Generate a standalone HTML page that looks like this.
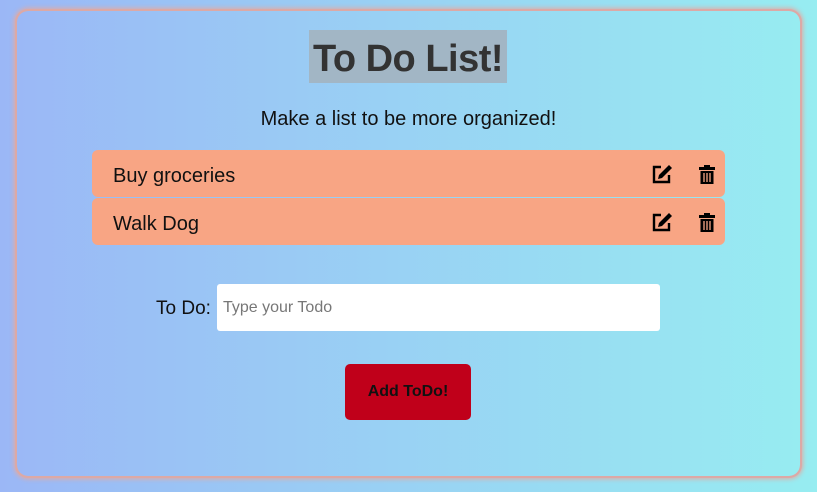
<!DOCTYPE html>
<html><head><style>
html,body{margin:0;padding:0;}
body{width:817px;height:492px;overflow:hidden;background:linear-gradient(90deg,#9bb7f6,#97edf1);font-family:"Liberation Sans",sans-serif;position:relative;white-space:nowrap;}
.card{position:absolute;left:17px;top:11px;width:783px;height:465px;border-radius:11px;box-shadow:0 0 0 2px #dca9a6,0 0 5px 3px #e2aaa3;}
h1{position:absolute;left:309px;top:30px;width:198px;height:53px;margin:0;background:#a2b6c5;color:#333;font-size:38px;font-weight:bold;line-height:58px;text-align:center;letter-spacing:-0.5px;}
.sub{position:absolute;left:0;width:817px;top:108px;text-align:center;font-size:20px;color:#111;}
.item{position:absolute;left:92px;width:633px;height:47px;background:#f8a584;border-radius:6px;}
.item span{position:absolute;left:21px;top:15px;font-size:20px;color:#111;}
.item svg{position:absolute;top:15px;}
.lab{position:absolute;left:156px;top:298px;font-size:19px;color:#111;}
.inp{position:absolute;left:217px;top:284px;width:443px;height:47px;background:#fff;border-radius:3px;}
.inp span{position:absolute;left:6px;top:15px;color:#777;font-size:16px;}
.btn{position:absolute;left:345px;top:364px;width:126px;height:56px;background:#c0001a;border-radius:5px;text-align:center;line-height:56px;font-weight:bold;font-size:16px;color:#111;}
</style></head><body>
<div class="card"></div>
<h1>To Do List!</h1>
<div class="sub">Make a list to be more organized!</div>
<div class="item" style="top:150px"><span>Buy groceries</span>
<svg style="left:560px" width="21" height="19" viewBox="0 0 21 19"><path d="M9 2H2v15h15v-7" fill="none" stroke="#000" stroke-width="2.4"/><path d="M17 0l3 3-10 10-4 1 1-4z" fill="#000"/></svg>
<svg style="left:607px" width="16" height="19" viewBox="0 0 16 19"><path d="M0 2h16v3H0zM5 0h6v2H5zM1.5 6h13v13h-13z" fill="#000"/><path d="M5 8v9M8 8v9M11 8v9" stroke="#f8a584" stroke-width="1.3"/></svg></div>
<div class="item" style="top:198px"><span>Walk Dog</span>
<svg style="left:560px" width="21" height="19" viewBox="0 0 21 19"><path d="M9 2H2v15h15v-7" fill="none" stroke="#000" stroke-width="2.4"/><path d="M17 0l3 3-10 10-4 1 1-4z" fill="#000"/></svg>
<svg style="left:607px" width="16" height="19" viewBox="0 0 16 19"><path d="M0 2h16v3H0zM5 0h6v2H5zM1.5 6h13v13h-13z" fill="#000"/><path d="M5 8v9M8 8v9M11 8v9" stroke="#f8a584" stroke-width="1.3"/></svg></div>
<div class="lab">To Do:</div>
<div class="inp"><span>Type your Todo</span></div>
<div class="btn">Add ToDo!</div>
</body></html>
